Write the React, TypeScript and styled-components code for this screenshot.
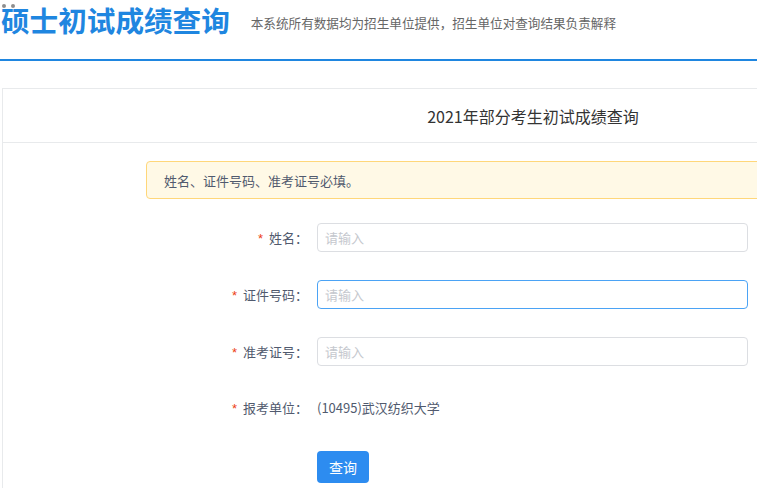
import styled, { createGlobalStyle } from 'styled-components';

const GlobalStyle = createGlobalStyle`
  html, body {
    margin: 0;
    padding: 0;
    overflow: hidden;
    background: #fff;
  }
  body {
    font-family: "Liberation Sans", "Noto Sans CJK SC", sans-serif;
    color: #515a6e;
  }
`;

const ScPage = styled.div`
  width: 1100px;
`;

const ScTopBar = styled.header`
  position: relative;
  display: flex;
  align-items: flex-end;
  height: 61px;
  padding-left: 1px;
  box-sizing: border-box;
  border-bottom: 2px solid #1f86e0;
`;

const ScDots = styled.span`
  position: absolute;
  left: 2px;
  top: 4px;
  display: flex;
  gap: 5px;

  &::before, &::after {
    content: '';
    width: 4px;
    height: 4px;
    border-radius: 50%;
    background: #8e8e8e;
  }
`;

const ScTitle = styled.h1`
  margin: 0 0 21px;
  font-size: 28.6px;
  line-height: 36px;
  font-weight: 700;
  color: #1f86e0;
  font-family: "Noto Sans CJK SC", sans-serif;
`;

const ScSubtitle = styled.span`
  margin: 0 0 26px 21px;
  font-size: 12.6px;
  line-height: 20px;
  color: #666;
  font-family: "Noto Sans CJK SC", sans-serif;
`;

const ScCard = styled.section`
  margin: 27px 0 0 2px;
  width: 1060px;
  border: 1px solid #e8eaec;
  border-right: none;
`;

const ScCardHead = styled.div`
  height: 53px;
  display: flex;
  align-items: center;
  justify-content: center;
  border-bottom: 1px solid #e8eaec;
  font-size: 16px;
  color: #333;
  font-family: "Noto Sans CJK SC", sans-serif;
`;

const ScBody = styled.div`
  padding: 18px 0 20px 143px;
`;

const ScAlert = styled.div`
  width: 700px;
  height: 38px;
  box-sizing: border-box;
  display: flex;
  align-items: center;
  padding-left: 17px;
  background: #fff9e6;
  border: 1px solid #ffd77a;
  border-radius: 4px;
  font-size: 13px;
  color: #515a6e;
  font-family: "Noto Sans CJK SC", sans-serif;
  margin-bottom: 24px;
`;

const ScForm = styled.form`
  display: flex;
  flex-direction: column;
  gap: 28px;
`;

const ScRow = styled.div<{ $h?: number }>`
  display: flex;
  align-items: center;
  min-height: ${p => p.$h ?? 29}px;
`;

const ScLabel = styled.label`
  width: 171px;
  box-sizing: border-box;
  padding-right: 9px;
  text-align: right;
  font-size: 13px;
  color: #515a6e;
  font-family: "Noto Sans CJK SC", sans-serif;

  &::before {
    content: '*';
    color: #ed4014;
    margin-right: 6px;
    font-family: "Liberation Sans", sans-serif;
  }
`;

const ScInput = styled.input<{ $focus?: boolean }>`
  width: 431px;
  height: 29px;
  box-sizing: border-box;
  padding: 0 7px;
  border: 1px solid ${p => p.$focus ? '#4ba3f5' : '#dcdee2'};
  border-radius: 4px;
  font-size: 13px;
  outline: none;
  font-family: "Noto Sans CJK SC", sans-serif;

  &::placeholder {
    color: #c5c8ce;
  }
`;

const ScValue = styled.span`
  font-size: 13px;
  color: #515a6e;
  font-family: "Noto Sans CJK SC", sans-serif;
`;

const ScButton = styled.button`
  margin: 2px 0 0 171px;
  width: 52px;
  height: 32px;
  border: none;
  border-radius: 4px;
  background: #2d8cf0;
  color: #fff;
  font-size: 14px;
  font-family: "Noto Sans CJK SC", sans-serif;
  cursor: pointer;
`;

export default function App() {
  const fields = [
    { label: '姓名：', focus: false },
    { label: '证件号码：', focus: true },
    { label: '准考证号：', focus: false }
  ];

  return <ScPage>
    <GlobalStyle />
    <ScTopBar>
      <ScDots />
      <ScTitle>硕士初试成绩查询</ScTitle>
      <ScSubtitle>本系统所有数据均为招生单位提供，招生单位对查询结果负责解释</ScSubtitle>
    </ScTopBar>
    <ScCard>
      <ScCardHead>2021年部分考生初试成绩查询</ScCardHead>
      <ScBody>
        <ScAlert>姓名、证件号码、准考证号必填。</ScAlert>
        <ScForm onSubmit={e => e.preventDefault()}>
          {fields.map(f => <ScRow key={f.label}>
            <ScLabel>{f.label}</ScLabel>
            <ScInput placeholder="请输入" $focus={f.focus} />
          </ScRow>)}
          <ScRow $h={27}>
            <ScLabel>报考单位：</ScLabel>
            <ScValue>(10495)武汉纺织大学</ScValue>
          </ScRow>
          <ScButton type="submit">查询</ScButton>
        </ScForm>
      </ScBody>
    </ScCard>
  </ScPage>;
}
